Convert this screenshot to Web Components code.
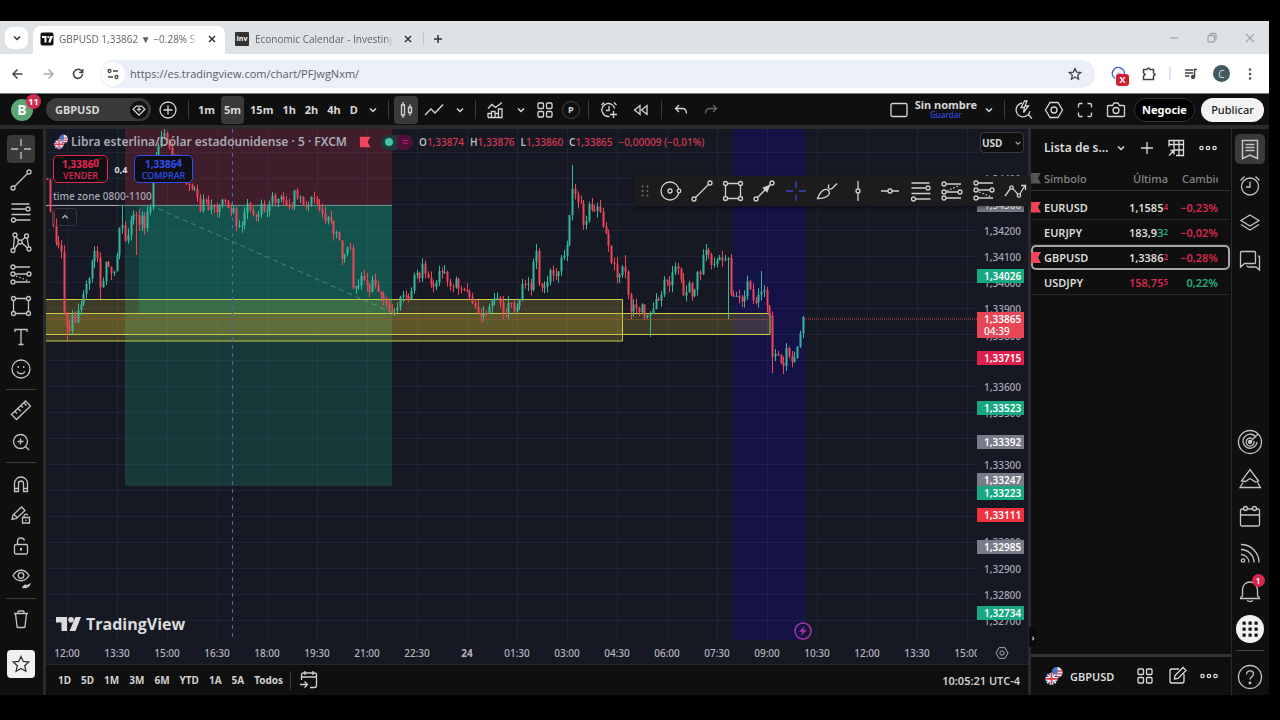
<!DOCTYPE html>
<html lang="es">
<head>
<meta charset="utf-8">
<title>GBPUSD 1,33862 ▼ −0.28% Sin nombre</title>
<style>
html,body{margin:0;background:#000}
body{font-family:"Noto Sans","Open Sans",sans-serif;color:#d6d6d6;font-size:12px}
</style>
</head>
<body>
<app-shell></app-shell>
<script>
const RESET = `*{box-sizing:border-box}
button{font:inherit;color:inherit;background:none;border:0;padding:0;margin:0;display:flex;align-items:center;justify-content:center;cursor:pointer;white-space:nowrap}
svg{display:block}`;

function define(name, css, html) {
  const t = document.createElement('template');
  t.innerHTML = `<style>${RESET}${css}</style>${html}`;
  customElements.define(name, class extends HTMLElement {
    constructor() {
      super();
      this.attachShadow({mode: 'open'}).append(t.content.cloneNode(true));
    }
  });
}

/* ---------- icons, on a 28 unit grid ---------- */
const dot = (x, y, r = 2) => `<circle cx="${x}" cy="${y}" r="${r}"/>`;
const ICONS = {
  cross: '<path d="M14 4v7M14 17v7M4 14h7M17 14h7"/>',
  trend: dot(6,22) + dot(22,6) + '<path d="M7.500 20.500 20.500 7.500"/>',
  fib: '<path d="M4.500 6h18M4.500 11h14M4.500 16.500h19M9 22h14.500"/>' + dot(21,11) + dot(6.500,22),
  pattern: dot(8,6) + dot(19.5,7) + dot(13,13) + dot(6,21.500) + dot(22,20) + '<path d="M7.500 8 6.300 19.500M9 7.700 12 11.500M14.500 11.500 18 8.500M20 9l1.700 9M11.500 14.500 7.500 20M15 14l5.500 5"/>',
  forecast: dot(6,6) + dot(6,13) + dot(22,13) + dot(6,21) + '<path d="M8 6h15M8 13h12M8 21h15"/><path stroke-dasharray="1.500 2" d="M9 15l13 5"/>',
  longpos: dot(6,7) + dot(6,15) + dot(22,15) + dot(6,21) + '<path d="M8 7h15M8 15h12M8 21h15"/><path stroke-dasharray="1.500 2" d="M9 14l13-6"/>',
  rect: dot(6.500,6.500) + dot(21.500,6.500) + dot(6.500,21.500) + dot(21.500,21.500) + '<path d="M8.500 6.500h11M8.500 21.500h11M6.500 8.500v11M21.500 8.500v11"/>',
  text: '<path d="M8 9V6.500h12V9M14 6.500v15M11.500 21.500h5"/>',
  smile: '<circle cx="14" cy="14" r="9"/><path d="M10 16.500c1.500 3 6.500 3 8 0M11.300 11v2M16.700 11v2"/>',
  ruler: '<path d="M4.500 18.500 18.500 5l5 5L9.500 23.500zM8 15.500l2 2M11 12.500l2.800 2.800M14 9.500l2 2M17 7l2.500 2.500"/>',
  zoom: '<circle cx="13.500" cy="13.500" r="7"/><path d="M18.500 18.500l3.500 3.500M13.500 10.500v6M10.500 13.500h6"/>',
  magnet: '<path d="M7.500 21.500v-8a6.500 6.500 0 0 1 13 0v8h-4v-8a2.500 2.500 0 0 0-5 0v8zM7.500 18.500h4M16.500 18.500h4"/>',
  pencil: '<path d="M5 18.500 6 14l8.500-8 3.500 3.500-8.500 8zM7 13.500l3.500 3.500M15.500 16.500h7v5.500h-7zM17 16.500v-1.500c0-2.500 3.500-2.500 3.500-.5M19 18.500v1.500"/>',
  lock: '<rect x="7.500" y="12.500" width="13" height="9.500" rx="1.500"/><path d="M10.500 12.500V9.500c0-4.500 6-4.500 7-1"/><path stroke-width="2" d="M14 16v2.500"/>',
  eye: '<path d="M6 11.500c4-7 12-7 16 0-4 7-12 7-16 0z"/><circle cx="14" cy="11.500" r="2.800"/><path fill="currentColor" stroke="none" d="M15 24c1-3 3-4.500 5-3l4-2c-1 4-4 6-9 5z"/>',
  trash: '<path d="M7 8.500h14M11 8.500V7a1 1 0 0 1 1-1h4a1 1 0 0 1 1 1v1.500M8.500 8.500 10 21.500q.2 1 1 1h6q.8 0 1-1L19.500 8.500"/>',
  star: '<path d="M14 6.500l2.300 5 5.500.6-4.100 3.700 1.200 5.400L14 18.400l-4.900 2.800 1.200-5.400-4.100-3.700 5.500-.6z"/>',
  chev: '<path stroke-width="1.500" d="M11 12.500l3 3 3-3"/>',
  up: '<path stroke-width="1.800" d="M10.500 15.500l3.500-3.500 3.500 3.500"/>',
  diamond: '<path fill="#111" stroke="none" d="M14 2.500a11.500 11.500 0 1 0 .01 0z"/><path d="M10.500 9h7l4 4-7.500 7.500L6.500 13zM14 10.500v5.500M11.300 13.300h5.400" stroke-width="1.600"/>',
  plus: '<circle cx="14" cy="14" r="8"/><path d="M14 9.500v9M9.500 14h9"/>',
  bars: '<path d="M9.500 9h3v10h-3zM11 6v3M11 19v3M16.500 11.500h3v5h-3zM18 8.500v3M18 16.500v3"/>',
  line: '<path d="M5 19l6-6 4 4 8-8.500"/>',
  indi: '<path d="M7 12.500l4-4 3.500 3 6.500-5M7 21.500v-4h3.500v4M10.500 21.500v-6H14v6M14 21.500v-4M17.500 21.500V13H21v8.500zM14 17.500h3.500M7 21.500h11"/>',
  grid: '<rect x="7" y="7" width="5.500" height="5.500" rx="1"/><rect x="15.500" y="7" width="5.500" height="5.500" rx="1"/><rect x="7" y="15.500" width="5.500" height="5.500" rx="1"/><rect x="15.500" y="15.500" width="5.500" height="5.500" rx="1"/>',
  alarmplus: '<path d="M19.700 12.500a6.500 6.500 0 1 0-5.200 7.900M14 10v4.500h-3M6.500 9l2.500-2.500M21.500 9 19 6.500M18.500 15v7M15 18.500h7"/>',
  rewind: '<path d="M13 9.500v9L7.500 14zM20 9.500v9L14.500 14z"/>',
  undo: '<path d="M12 9 8.500 12.500 12 16M8.500 12.500H15q4.500 0 4.500 5"/>',
  redo: '<path d="M16 9l3.500 3.500L16 16M19.500 12.500H13q-4.500 0-4.500 5"/>',
  square: '<rect x="6" y="7.500" width="16" height="13" rx="1.500"/>',
  quick: '<path d="M12 7a7 7 0 1 0 8 8M18 18.500l4 4M14.500 5l-3.500 6.500h3.500l-1 5L18.500 10H15l2-5z"/>',
  gear: '<path d="M10 6.500h8l4.500 7.500L18 21.500h-8L5.500 14z"/><circle cx="14" cy="14" r="3"/>',
  full: '<path d="M7.500 11.500V9q0-1.500 1.500-1.500h2.500M16.500 7.500H19q1.500 0 1.500 1.500v2.500M20.500 16.500V19q0 1.500-1.500 1.500h-2.500M11.500 20.500H9q-1.500 0-1.500-1.500v-2.500"/>',
  camera: '<path d="M6.500 9.500h4l1.500-2.500h4l1.500 2.500h4q1 0 1 1v9q0 1-1 1h-15q-1 0-1-1v-9q0-1 1-1z"/><circle cx="14" cy="14.500" r="3"/>',
  bigplus: '<path d="M14 8v12M8 14h12"/>',
  table: '<path d="M7 12.500v-6h14.500v15H14M7 10.500h14.500M12 6.500v9M17 6.500v15M12 16h9.500M7 21.500l5-5M8.500 16.500H12v4"/>',
  more: dot(7.500,14,1.700) + dot(14,14,1.700) + dot(20.500,14,1.700),
  list: '<path stroke-width="1.500" d="M6.500 5.500h15v18L14 20l-7.500 3.500zM9.500 9.500h9M9.500 12.500h9M9.500 15.500h9"/>',
  alarm: '<circle cx="14" cy="14.500" r="8.500"/><path d="M14 9.500V15h-4M4.500 8.500l4-4M23.500 8.500l-4-4"/>',
  layers: '<path d="M14 6l9 5.500-9 5.500-9-5.500zM5 15.500l9 5.500 9-5.500"/>',
  chat: '<path d="M5.500 5.500h13q1 0 1 1v10q0 1-1 1H8.500l-4 3.500v-14.500q0-1 1-1zM22 10q1.500 0 1.500 1v13l-3.500-3h-7.500q-1.500 0-1.500-1.500"/>',
  radar: '<circle cx="14" cy="14" r="11.500"/><path d="M20 9.500a7 7 0 1 0 1 4.500M18 13a4 4 0 1 1-2-2.500M14 14l8-8"/><circle cx="14" cy="14" r="1.500" fill="currentColor"/>',
  pyramid: '<path d="M14 4.500l8.500 11.500-3 1-5.500-3.500-4.500 3-4-.5zM7 17.500l-3 5h20.500l-3-5"/>',
  cal: '<path d="M6 7h16q1.500 0 1.500 1.500v14q0 1.500-1.500 1.500H6q-1.500 0-1.500-1.500v-14Q4.500 7 6 7zM4.500 13h19"/><circle fill="#0f0f0f" cx="9.500" cy="6.500" r="2"/><circle fill="#0f0f0f" cx="18.500" cy="6.500" r="2"/>',
  rss: '<path d="M5 5.500A18 18 0 0 1 23 23.500M5 10.500a13 13 0 0 1 13 13M5 15.500a8 8 0 0 1 8 8"/><circle cx="7" cy="21.500" r="1.700"/>',
  bell: '<path d="M4.500 22.500h19q0-1.500-2-2.500v-6.500c0-10-15-10-15 0V20q-2 1-2 2.500zM11 24.500q3 2 6 0"/>',
  help: '<circle cx="14" cy="14" r="11.500"/><path d="M10.500 11.500c0-5 7-4.500 7-.5 0 3-3.500 3-3.500 5.500"/><circle cx="14" cy="20" r=".8"/>',
  dots9: [8,14,20].map(y => [8,14,20].map(x => `<rect x="${x-1.500}" y="${y-1.500}" width="3.200" height="3.200" rx=".5" fill="currentColor" stroke="none"/>`).join('')).join(''),
  edit: '<path d="M16 7H9Q7 7 7 9v10q0 2 2 2h10q2 0 2-2v-7M11.500 17l.5-3.500L20 5.500l3 3-8 8z"/>',
  goto: '<path d="M6.500 11h15M6.500 14V9q0-2 2-2h11q2 0 2 2v10.500q0 2-2 2H15M10 5v4M18 5v4M5 18.500h7M9.500 15.500l3 3-3 3"/>',
  target: '<circle cx="14" cy="14" r="9"/><circle cx="14" cy="14" r="2"/><circle cx="23" cy="14" r="1.800" fill="#1c1c1c"/>',
  arrowline: dot(6,22) + dot(22,6) + '<path d="M7.500 20.500 20.500 7.500"/><path fill="currentColor" d="M19.500 8.500l-2.500 6-3.500-3.500z"/>',
  brush: '<path d="M4.500 21.500c3-8 8-11 11-8 3 4-2 8-11 8zM16 7.500c-2 4 1 6 3.500 3.500l4.500-4.500"/>',
  vline: '<path d="M14 4v8M14 16v8"/>' + dot(14,14),
  hline: '<path d="M5 14h7M16 14h7"/>' + dot(14,14),
  path: '<path d="M4 19l6.500-9 7.500 8.500L24 8.500M20 8.500h4.500V13"/>' + '<circle cx="10.500" cy="10.500" r="1.700" fill="#1c1c1c"/><circle cx="18" cy="18.500" r="1.700" fill="#1c1c1c"/>',
  grip: [9.5,14,18.5].map(y => [11.5,16.5].map(x => `<circle cx="${x}" cy="${y}" r=".9" fill="currentColor" stroke="none"/>`).join('')).join(''),
  close: '<path stroke-width="1.500" d="M11 11l6 6M17 11l-6 6"/>',
  tabplus: '<path stroke-width="1.500" d="M14 10v8M10 14h8"/>',
  back: '<path stroke-width="1.500" d="M18.500 14h-9M13.500 9.500 9 14l4.500 4.500"/>',
  fwd: '<path stroke-width="1.500" d="M9.500 14h9M14.500 9.500 19 14l-4.500 4.500"/>',
  reload: '<path stroke-width="1.500" d="M18.500 14a4.500 4.500 0 1 1-1.500-3.500l1.500 1.500M18.700 9v3.500h-3.500"/>',
  tune: '<path stroke-width="1.300" d="M14 11h5M9 17h5"/><circle stroke-width="1.300" cx="10.500" cy="11" r="1.500"/><circle stroke-width="1.300" cx="17.500" cy="17" r="1.500"/>',
  bstar: '<path stroke-width="1.300" d="M14 8.500l1.700 3.700 4 .3-3 2.700.9 4L14 17l-3.600 2.200.9-4-3-2.700 4-.3z"/>',
  puzzle: '<path stroke-width="1.500" d="M8.500 9.500h3.500q1.500-3 3 0h3.500v3.500q3 1.500 0 3v3.500h-10v-3.500q3-1.500 0-3z"/>',
  music: '<path stroke-width="1.500" d="M8 10h8M8 13h8M8 16h4.500M17.500 17V9.500h2.500"/><circle cx="16" cy="17" r="1.500" fill="currentColor"/>',
  kebab: [9.500,14,18.500].map(y => `<circle cx="14" cy="${y}" r="1.200" fill="currentColor" stroke="none"/>`).join(''),
  min: '<path d="M10 14h8"/>',
  max: '<rect x="10" y="11.500" width="6.500" height="6.500" rx="1"/><path d="M12 11.500v-1q0-1 1-1h4q1 0 1 1v4.500q0 1-1 1"/>',
  wclose: '<path d="M10 10l8 8M18 10l-8 8"/>',
  bolt: '<circle cx="14" cy="14" r="8" stroke-width="1.500"/><path fill="currentColor" stroke="none" d="M15.500 9 10 14.800h3.200L12 19l5.800-6h-3.300z"/>',
  flag: '<path fill="currentColor" stroke="none" d="M8 8h12.500l-3.500 6 3.500 6H8z"/>',
  pair: '<defs><clipPath id="a"><circle cx="18.500" cy="9" r="7.500"/></clipPath><clipPath id="b"><circle cx="10.500" cy="18" r="8.500"/></clipPath></defs><g clip-path="url(#a)" stroke="none"><path fill="#eee" d="M10 0h18v18H10z"/><path stroke="#d8404d" stroke-width="2" d="M10 7h18M10 11h18M10 15h18"/><path fill="#3f74c8" d="M10 0h9v10h-9z"/></g><g clip-path="url(#b)"><path fill="#26468f" stroke="none" d="M0 8h20v20H0z"/><path stroke="#fff" stroke-width="2" d="M2 9l17 17M19 9 2 26"/><path stroke="#fff" stroke-width="5" d="M10.500 8v20M0 18h20"/><path stroke="#e0374b" stroke-width="2.500" d="M10.500 8v20M0 18h20"/></g>',
  tv: '<rect x="7.500" y="7.500" width="13" height="13" rx="2" fill="#111" stroke="none"/><path fill="#fff" stroke="none" d="M9 11h4.500v6.500h-2v-4.500H9zM17 11h3l-2.500 6.500h-2.200z"/><circle cx="15.200" cy="12" r="1" fill="#fff" stroke="none"/>',
  ghost: '<path stroke="#4a62d8" stroke-width="1.500" d="M10 18.500a6 6 0 1 1 9-3"/><circle cx="14" cy="15" r="2" stroke="#c8b8e8"/>'
};
customElements.define('tv-icon', class extends HTMLElement {
  constructor() { super(); this.attachShadow({mode: 'open'}); }
  connectedCallback() {
    this.shadowRoot.innerHTML = `<style>:host{display:block;flex:none;width:28px;height:28px}svg{display:block;width:100%;height:100%}</style>
    <svg viewBox="0 0 28 28" fill="none" stroke="currentColor" stroke-width="1.3" aria-hidden="true">${ICONS[this.getAttribute('name')]}</svg>`;
  }
});
const btn = (icon, label, cls = '') => `<button class="${cls}" aria-label="${label}"><tv-icon name="${icon}"></tv-icon></button>`;

/* ---------- browser frame ---------- */
define('browser-tabs', `
:host{display:flex;height:33px;padding:0 0 0 5px;background:#dee2e5;color:#333;font:10px "Open Sans",sans-serif;align-items:flex-end}
.menu{width:23px;height:22px;border-radius:8px;background:#fff;margin:0 5px 5px 0;overflow:hidden}
.tab{display:flex;align-items:center;width:192px;height:28px;padding-bottom:2px;border-radius:8px 8px 0 0;color:#5f6368;overflow:hidden}
.tab.on{background:#fff}
.tab.off{width:196px}
.tab tv-icon{margin-right:-2px}
.tab button{width:28px;color:#333;flex:none}
.t{flex:1;overflow:hidden;white-space:nowrap;-webkit-mask:linear-gradient(90deg,#000 94%,transparent);mask:linear-gradient(90deg,#000 94%,transparent)}
.inv{flex:none;width:14px;height:14px;margin:0 6px 0 10px;background:#333;color:#fff;font:bold 7px/14px "Open Sans",sans-serif;text-align:center;border-radius:1px}
.sep{width:1px;height:14px;background:#c3c7ca;margin:0 0 9px 2px}
.plus{width:28px;height:28px;padding-bottom:2px}
.win{display:flex;margin-left:auto;color:#a4a8ab}
.win button{width:38px;height:32px}`,
`<button class="menu" aria-label="Buscar pestañas"><tv-icon name="chev"></tv-icon></button>
<div class="tab on"><tv-icon name="tv"></tv-icon><span class="t">GBPUSD 1,33862 ▼ −0.28% Sin nombre</span>${btn('close','Cerrar')}</div>
<div class="tab off"><span class="inv">Inv</span><span class="t">Economic Calendar - Investing.com</span>${btn('close','Cerrar')}</div>
<span class="sep"></span>${btn('tabplus','Nueva pestaña','plus')}
<div class="win">${btn('min','Minimizar')}${btn('max','Restaurar')}${btn('wclose','Cerrar ventana')}</div>`);

define('browser-bar', `
:host{display:flex;align-items:center;height:40px;padding:0 3px 0 4px;background:#fff;color:#444;border-bottom:1px solid #777}
button{width:28px;height:28px;margin-right:2px}
.dim{color:#aaa}
.box{flex:1;display:flex;align-items:center;height:28px;margin:0 10px 0 6px;padding-right:4px;border-radius:14px;background:#ebeffa;overflow:hidden}
.tune{width:24px;height:24px;border-radius:12px;background:#fff;margin-left:1px;overflow:hidden}
input{flex:1;min-width:0;border:0;background:none;outline:0;font:11px "Open Sans",sans-serif;color:#5a5d63;padding:0 0 0 3px}
.ext{position:relative}
.x{position:absolute;right:4px;bottom:2px;width:13px;height:12px;border-radius:3px;background:#cf1f30;color:#fff;font:bold 9px/12px "Open Sans",sans-serif;text-align:center}
.sep{width:2px;height:13px;background:#dfe3f3;margin:0 6px 0 4px}
.me{width:17px;height:17px;border-radius:9px;background:#3f5a60;color:#ddd;font:10px "Open Sans",sans-serif;margin:0 6px}`,
`${btn('back','Atrás')}${btn('fwd','Adelante','dim')}${btn('reload','Recargar')}
<div class="box">${btn('tune','Información del sitio','tune')}<input aria-label="Dirección" value="https://es.tradingview.com/chart/PFJwgNxm/">${btn('bstar','Favorito')}</div>
<button class="ext" aria-label="Extensión"><tv-icon name="ghost"></tv-icon><span class="x">X</span></button>
${btn('puzzle','Extensiones')}<span class="sep"></span>${btn('music','Multimedia')}<button class="me">C</button>${btn('kebab','Menú')}`);

/* ---------- top toolbar ---------- */
define('top-bar', `
:host{display:flex;align-items:center;gap:2px;height:35px;padding:0 5px 0 11px;background:#0f0f0f;border-bottom:4px solid #2b2b2d;font-weight:700;font-size:11px}
.av{position:relative;width:22px;height:22px;border-radius:11px;background:#5aa773;color:#fff;font-size:14px;margin-right:11px}
.n{position:absolute;left:15px;top:-5px;width:15px;height:15px;border-radius:8px;background:#d22a4e;font-size:9px;line-height:15px}
.sym{width:105px;height:23px;border-radius:12px;background:#3a3a3a;justify-content:space-between;padding:0 1px 0 9px}
.sym tv-icon{width:22px;height:22px}
.i{width:28px;height:28px}
.m{width:24px;height:28px}
.l{width:30px;height:28px}
.c{width:20px;height:28px}
.on{background:#3a3a3a;border-radius:4px}
.sep{width:1px;height:19px;background:#3a3a3a;margin:0 3px}
.tf{display:flex;gap:3px;margin-left:1px}
.tf button{height:28px;padding:0 3px}
.p{width:18px;height:18px;border:1px solid #444;border-radius:9px;font-size:9px;margin:0 3px}
.dim{color:#666}
.name{display:block;text-align:center;line-height:10px}
.name small{display:block;color:#2f48e0;font-size:8px;font-weight:500}
.gap{flex:1}
.neg,.pub{height:24px;border-radius:12px}
.neg{width:61px;background:#000;border:1px solid #333;color:#fff;margin:0 4px 0 2px}
.pub{width:63px;background:#f2f2f2;color:#222;font-weight:500}`,
`<button class="av" aria-label="Cuenta">B<span class="n">11</span></button>
<button class="sym">GBPUSD<tv-icon name="diamond"></tv-icon></button>${btn('plus','Comparar','l')}<span class="sep"></span>
<div class="tf"><button>1m</button><button class="on">5m</button><button>15m</button><button>1h</button><button>2h</button><button>4h</button><button>D</button></div>
${btn('chev','Intervalos','c')}<span class="sep"></span>${btn('bars','Velas','m on')}${btn('line','Línea','i')}${btn('chev','Tipos de gráfico','c')}<span class="sep"></span>
${btn('indi','Indicadores','i')}${btn('chev','Favoritos','c')}${btn('grid','Plantillas','m')}<button class="p">P</button><span class="sep"></span>
${btn('alarmplus','Alerta','l')}${btn('rewind','Repetición','l')}<span class="sep"></span>${btn('undo','Deshacer','i')}${btn('redo','Rehacer','i dim')}
<span class="gap"></span>
${btn('square','Diseño','i')}<button class="name">Sin nombre<small>Guardar</small></button>${btn('chev','Gestionar diseño','c')}<span class="sep"></span>
${btn('quick','Búsqueda rápida','i')}${btn('gear','Configuración','i')}${btn('full','Pantalla completa','l')}${btn('camera','Captura','i')}
<button class="neg">Negocie</button><button class="pub">Publicar</button>`);

/* ---------- drawing rail ---------- */
define('drawing-rail', `
:host{display:flex;flex-direction:column;align-items:center;justify-content:space-between;width:46px;padding:6px 1px 17px 0;background:#0f0f0f;border-right:3px solid #2b2b2d;color:#c4c4c4}
button{width:28px;height:28px}
.on{background:#3a3a3a;border-radius:4px}
.sep{width:30px;height:1px;background:#3c3c3c;margin:3px 0}
.fav{background:#f0f0f0;color:#333;border-radius:4px;margin-top:13px}`,
btn('cross','Cursor','on') + btn('trend','Líneas') + btn('fib','Fibonacci') + btn('pattern','Patrones') + btn('forecast','Previsión') + btn('rect','Formas') + btn('text','Texto') + btn('smile','Iconos') +
'<span class="sep"></span>' + btn('ruler','Medir') + btn('zoom','Acercar') + '<span class="sep"></span>' +
btn('magnet','Imán') + btn('pencil','Modo dibujo') + btn('lock','Bloquear') + btn('eye','Ocultar') + '<span class="sep"></span>' + btn('trash','Eliminar') + btn('star','Favoritos','fav'));

/* ---------- chart ---------- */
/* Price path: x,y pairs in plot pixels; the plot starts at x = 46, y = 129. */
const PATH = `47,180 49,208 52,222 54,238 58,245 61,249 63,310 66,322 68,334 72,318 76,324 79,305 82,308 84,285 88,281 92,260 95,252 98,256 100,288 103,280 105,257 108,270 110,266 113,278 116,262 118,239 121,213 124,240 126,240 130,224 135,208 138,228 141,212 143,231 147,215 150,206 152,180 156,150 160,140 165,132 170,150 175,155 180,168 185,186 190,187 195,191 200,208 204,198 208,207 213,207 217,212 222,202 225,204 230,215 233,206 236,229 243,222 246,204 250,209 254,215 259,214 262,203 266,216 270,200 273,194 276,206 281,194 285,203 292,206 295,189 299,199 303,203 307,208 312,198 316,204 321,209 325,220 331,218 334,239 338,231 342,261 346,247 350,248 353,290 358,288 362,276 366,286 369,292 372,279 378,291 383,298 386,306 390,312 393,315 397,307 400,296 404,292 408,304 412,284 415,270 420,276 423,263 427,279 431,284 435,286 439,270 442,270 446,277 451,289 456,281 461,292 466,288 470,296 474,306 477,314 481,315 485,313 489,307 493,300 499,300 501,309 504,319 508,305 512,304 515,312 519,303 522,287 527,284 531,290 534,257 537,252 539,288 543,291 547,283 549,272 553,275 558,274 562,256 566,254 568,223 571,203 573,178 576,206 579,195 582,215 585,234 588,200 592,214 596,206 599,204 602,222 606,234 610,257 615,270 618,279 622,268 624,266 628,298 631,314 634,299 638,314 641,305 645,316 651,316 654,300 657,297 660,302 663,283 665,276 669,284 673,272 677,266 682,288 685,300 688,279 693,301 697,270 701,272 703,253 707,252 711,264 715,263 718,255 722,264 725,257 728,258 729,294 733,293 737,300 743,304 748,276 752,300 757,300 761,290 764,290 766,304 769,306 771,357 774,350 779,356 783,366 786,346 790,362 793,363 796,350 799,344 801,318 803,318`
  .split(/\s+/).map(p => p.split(',').map(Number));
/* Long wicks, by x: [high, low], 0 where the ordinary wick stands. */
const SPIKES = {573: [165, 0], 729: [0, 319], 650: [0, 337], 630: [0, 319], 68: [0, 340], 771: [0, 373], 537: [244, 0], 762: [271, 0], 706: [244, 0], 625: [255, 0], 121: [205, 0], 784: [0, 374], 100: [0, 299], 137: [0, 255], 802: [316, 0]};
function level(x) {
  for (let i = 1; i < PATH.length; i++) if (x <= PATH[i][0]) {
    const [a, b] = PATH[i - 1], [c, d] = PATH[i];
    return b + (d - b) * (x - a) / (c - a);
  }
  return PATH[PATH.length - 1][1];
}
function candles() {
  let up = '', down = '', prev = 178;
  for (let i = 0; i < 273; i++) {
    const x = 47.2 + i * 2.778, r = n => Math.abs(Math.sin(i * n) * 43.7) % 1;
    const close = level(x) + (r(12.9) - .5) * 6;
    let hi = Math.min(prev, close) - r(7.3) * 7, lo = Math.max(prev, close) + r(3.7) * 7;
    for (const k in SPIKES) if (Math.abs(k - x) < 1.4) { if (SPIKES[k][0]) hi = SPIKES[k][0]; if (SPIKES[k][1]) lo = SPIKES[k][1]; }
    const px = Math.round(x) - 46, a = Math.min(prev, close) - 129, b = Math.max(prev, close, Math.min(prev, close) + 1) - 129;
    const d = `M${px - .5} ${a.toFixed(1)}h2V${b.toFixed(1)}h-2zM${px} ${(hi - 129).toFixed(1)}h1V${(lo - 129).toFixed(1)}h-1z`;
    if (close < prev) up += d; else down += d;
    prev = close;
  }
  return `<path fill="#35b79c" d="${up}"/><path fill="#ee4558" d="${down}"/>`;
}
const vgrid = Array.from({length: 19}, (_, i) => `M${21.5 + i * 50} 0V511`).join('');
const hgrid = Array.from({length: 19}, (_, i) => `M0 ${23.500 + i * 26}H931`).join('');
define('price-plot', `:host{display:block;min-width:0;overflow:hidden}svg{width:100%;height:100%}`,
`<svg viewBox="0 0 931 511" preserveAspectRatio="xMinYMin slice" role="img" aria-label="Gráfico de velas GBPUSD">
<rect x="687" width="72" height="511" fill="#141247"/>
<path d="${vgrid}${hgrid}" stroke="#7a88b0" stroke-opacity=".1" fill="none"/>
<rect x="79" width="267" height="76" fill="#f23645" fill-opacity=".19"/>
<rect x="79" y="76" width="267" height="281" fill="#1c9a7c" fill-opacity=".25"/>
<rect x="93" y="76" width="253" height="109" fill="#0c9a7c" fill-opacity=".27"/>
<path d="M72 76.500H346" stroke="#5f8f8a"/><path d="M0 76.500H72" stroke="#aaa"/>
<path d="M104 76 347 184" stroke="#4f8478" stroke-dasharray="5 4" fill="none"/>
<g fill="#ffe53b" fill-opacity=".17" stroke="#c8cc48"><path d="M-2 170.500H576.500V212H-2z"/><path d="M-2 184.500H724V205.500H-2z"/></g>
${candles()}
<path d="M186.500 0V511" stroke="#4a66b8" stroke-dasharray="4 4"/>
<path d="M758 190H931" stroke="#d8384f" stroke-dasharray="1 1"/><path d="M0 190.500H724" stroke="#a05038" stroke-opacity=".5"/>
</svg>`);

/* Price scale: [text, centre y from the plot's top, kind] */
const SCALE = [['1,34400',50,''],['1,34300',76,'g'],['1,34200',102,''],['1,34100',128,''],['1,34000',154,''],['1,34026',147,'u'],['1,33900',180,''],['1,33800',207,''],['1,33715',229,'d'],['1,33600',258,''],['1,33500',284,''],['1,33523',279,'u'],['1,33300',336,''],['1,33392',313,'g'],['1,33247',351,'g'],['1,33223',364,'u'],['1,33111',386,'r'],['1,33000',413,''],['1,32985',418,'g'],['1,32900',440,''],['1,32800',466,''],['1,32700',492,''],['1,32734',484,'u']];
define('price-scale', `
:host{display:block;position:relative;width:51px;font-size:10px;font-weight:500;color:#a9abb3;overflow:hidden}
span{position:absolute;left:0;width:47px;height:14px;line-height:14px;padding-left:7px;transform:translateY(-50%)}
.u,.d,.r,.g,.now{color:#fff;font-weight:600}
.u{background:#16a880}.d{background:#e0204c}.r{background:#ee3340}.g{background:#787b88}
.now{height:26px;line-height:12px;padding-top:1px;background:#e84656}
.now small{display:block;font-size:10px;font-weight:500}
select{position:absolute;left:3px;top:3px;width:44px;height:21px;background:#0f0f0f;color:#d6d6d6;border:1px solid #3a3a3c;border-radius:4px;font:700 10px "Noto Sans",sans-serif;appearance:none;padding:0 1px}
.arrow{left:34px;top:14px;width:14px;padding:0;pointer-events:none}
.arrow tv-icon{width:22px;height:22px;margin:-4px}`,
SCALE.map(([t, y, k]) => `<span class="${k}" style="top:${y}px">${t}</span>`).join('') +
'<span class="now" style="top:196px">1,33865<small>04:39</small></span><select aria-label="Moneda"><option>USD</option></select><span class="arrow"><tv-icon name="chev"></tv-icon></span>');

define('time-scale', `
:host{display:flex;height:24px;padding:2px 12px 0 0;align-items:center;font-size:10px;font-weight:500;color:#b4b6bd}
.t{flex:1;display:flex;overflow:hidden;min-width:0}
.t span{flex:none;width:50px;text-align:center}
.t span:first-child{margin-left:-4px}
b{font-weight:700}
tv-icon{width:20px;height:20px;margin:0 4px 0 15px}`,
'<div class="t">' + '12:00 13:30 15:00 16:30 18:00 19:30 21:00 22:30 24 01:30 03:00 04:30 06:00 07:30 09:00 10:30 12:00 13:30 15:00'.split(' ').map(t => `<span>${t === '24' ? '<b>24</b>' : t}</span>`).join('') + '</div><tv-icon name="gear"></tv-icon>');

define('chart-legend', `
:host{display:block;color:#a9abb3}
.row{display:flex;align-items:center;height:18px}
.pair{width:16px;height:16px;margin-right:2px}
h1{margin:0;font-size:12px;line-height:18px;font-weight:600;white-space:nowrap}
.flag{width:24px;height:24px;color:#f2455a;margin:0 4px 0 6px}
.pill{display:flex;align-items:center;justify-content:space-around;width:32px;height:15px;border-radius:8px;background:linear-gradient(90deg,#1f3a3a 50%,#4d1038 50%);color:#d81b74;font-size:12px;line-height:12px;margin-right:6px}
.pill i{width:8px;height:8px;border-radius:4px;background:#3ec8a4}
.ohlc{font-size:10px;font-weight:500;color:#d83850;white-space:nowrap}
.ohlc b{color:#b8bac2;font-weight:600}
.ohlc span{margin-right:6px}
.trade{display:flex;align-items:center;gap:6px;margin-top:4px;font-size:10px;font-weight:700;color:#ddd}
.trade button{display:block;height:28px;border-radius:5px;background:#0e0e14;border:1px solid;line-height:12px;text-align:center}
.trade small{display:block;font-size:9px;line-height:11px;font-weight:500}
.sell{width:55px;color:#e8264e}.buy{width:59px;color:#2c50f0}
.trade sup{font-size:10px;line-height:8px;vertical-align:1px}
.trade em{font-style:normal;font-size:9px;width:14px;text-align:center}
.study{margin-top:5px;font-size:10px;line-height:16px;font-weight:500}
.fold{width:24px;height:18px;margin-top:4px;border:1px solid #34363f;border-radius:3px;overflow:hidden}
.fold tv-icon{width:22px;height:22px}`,
`<div class="row"><tv-icon class="pair" name="pair"></tv-icon><h1>Libra esterlina/Dólar estadounidense · 5 · FXCM</h1><tv-icon class="flag" name="flag"></tv-icon><span class="pill"><i></i>≈</span>
<div class="ohlc"><span><b>O</b>1,33874</span><span><b>H</b>1,33876</span><span><b>L</b>1,33860</span><span><b>C</b>1,33865</span>−0,00009 (−0,01%)</div></div>
<div class="trade"><button class="sell">1,3386<sup>0</sup><small>VENDER</small></button><em>0,4</em><button class="buy">1,3386<sup>4</sup><small>COMPRAR</small></button></div>
<div class="study">time zone 0800-1100</div><button class="fold" aria-label="Plegar"><tv-icon name="up"></tv-icon></button>`);

define('favorites-bar', `
:host{display:flex;align-items:center;justify-content:space-between;height:30px;padding:0 1px 0 3px;background:#1c1c1e;color:#d0d0d0;box-shadow:0 2px 4px #0006;overflow:hidden}
button{width:28px;height:28px}
.grip{color:#777;margin:0 -6px}
.on{color:#3a46c8}`,
'<tv-icon class="grip" name="grip"></tv-icon>' + btn('target','Círculo') + btn('trend','Línea de tendencia') + btn('rect','Rectángulo') + btn('arrowline','Flecha') + btn('cross','Cursor','on') + btn('brush','Pincel') + btn('vline','Línea vertical') + btn('hline','Línea horizontal') + btn('fib','Fibonacci') + btn('longpos','Posición larga') + btn('forecast','Posición corta') + btn('path','Trayectoria'));

define('chart-pane', `
:host{display:grid;position:relative;grid-template:minmax(0,1fr) auto / minmax(0,1fr) auto;background:#161824;min-width:0;min-height:0}
time-scale{grid-column:1/-1}
chart-legend{position:absolute;left:7px;top:4px}
favorites-bar{position:absolute;right:-2px;top:47px;width:396px;z-index:1}
.brand{position:absolute;left:10px;bottom:28px;display:flex;align-items:center;gap:5px;color:#dcdcdc;font:700 16px/24px "Open Sans",sans-serif}
.bolt{position:absolute;left:743px;bottom:19px;color:#a236b0}
.bolt tv-icon{width:28px;height:28px}`,
`<price-plot></price-plot><price-scale></price-scale><time-scale></time-scale>
<chart-legend></chart-legend><favorites-bar></favorites-bar>
<div class="brand"><svg width="25" height="14" viewBox="0 0 25 14" fill="currentColor" aria-hidden="true"><path d="M0 0h11v14H5.500V5.500H0zM19.500 0H25l-5.500 14h-6z"/><circle cx="15" cy="2.800" r="2.800"/></svg>TradingView</div>
<button class="bolt" aria-label="Noticias"><tv-icon name="bolt"></tv-icon></button>`);

define('range-bar', `
:host{display:flex;align-items:center;height:31px;padding:0 8px 0 12px;background:#0f0f0f;border-top:1px solid #26272c;font-size:10px;font-weight:700;color:#d0d0d0}
.r{display:flex;gap:10px}
.sep{width:1px;height:19px;background:#3a3a3a;margin:0 4px 0 7px}
.time{margin-left:auto;font-size:11px;font-weight:600}
button{height:24px}`,
'<div class="r">' + '1D 5D 1M 3M 6M YTD 1A 5A Todos'.split(' ').map(t => `<button>${t}</button>`).join('') + '</div><span class="sep"></span>' + btn('goto','Ir a la fecha') + '<button class="time">10:05:21 UTC-4</button>');

/* ---------- watchlist ---------- */
const ROWS = [['EURUSD','1,1585','','4','−0,23%','dn',1],['EURJPY','183,9','3','2','−0,02%','dn',0,'up'],['GBPUSD','1,3386','','2','−0,28%','dn',1],['USDJPY','','158,75','5','0,22%','up',0,'dn']];
define('watch-list', `
:host{display:flex;flex-direction:column;position:relative;width:204px;background:#0f0f0f;border-left:3px solid #2b2b2d;border-right:1px solid #2b2b2d;font-weight:600;color:#dcdcdc}
header{display:flex;align-items:center;height:37px;padding-left:13px;font-size:12px}
header .c{width:26px}
header .k{width:32px}
table{border-collapse:separate;border-spacing:0;width:199px;table-layout:fixed;font-size:11px}
th{color:#858585;font-weight:500;font-size:11px;text-align:right;height:25px;border-bottom:1px solid #333;padding:0;overflow:hidden;white-space:nowrap}
th:first-child,td:first-child{text-align:left;width:82px}
td:nth-child(2),th:nth-child(2){width:55px}
th:last-child,td:last-child{padding-right:12px}
th:last-child div{width:36px;margin-left:auto;overflow:hidden;text-align:left}
td{height:25px;padding:0;text-align:right;border-bottom:1px solid #26262a}
tbody::before{content:"";display:block;height:4px}
.s{display:flex;align-items:center;gap:3px}
.f{width:10px;height:11px;background:#f2455a;clip-path:polygon(0 0,100% 0,70% 50%,100% 100%,0 100%)}
.f.no{background:none}.f.gray{background:#555}
.dn{color:#d62850}.up{color:#25b083}
sup{font-size:8px;line-height:8px;vertical-align:2px}
.sel td{border-top:2px solid #a6a6a6;border-bottom:2px solid #a6a6a6}
.sel td:first-child{border-left:2px solid #a6a6a6;border-radius:5px 0 0 5px}
.sel td:last-child{border-right:2px solid #a6a6a6;border-radius:0 5px 5px 0;padding-right:10px}
.sel .f{margin-left:-2px}
footer{display:flex;align-items:center;height:41px;margin-top:auto;border-top:3px solid #333;padding:0 6px 0 13px;font-size:11px}
footer .pair{width:20px;height:20px;margin-right:6px}
footer button{width:32px}
footer span{margin-right:auto}
.handle{position:absolute;left:-2px;bottom:48px;width:8px;height:20px;background:#0a0a0a;border-radius:0 4px 4px 0;font-size:9px}`,
`<header><button>Lista de s...</button>${btn('chev','Listas','c')}${btn('bigplus','Añadir','c')}${btn('table','Vista de tabla','k')}${btn('more','Más','k')}</header>
<table><thead><tr><th><div class="s"><i class="f gray"></i>Símbolo</div></th><th>Última</th><th><div>Cambio%</div></th></tr></thead><tbody>` +
ROWS.map(([s, p, q, u, c, k, f, m]) => `<tr class="${s === 'GBPUSD' ? 'sel' : ''}"><td><div class="s"><i class="f ${f ? '' : 'no'}"></i>${s}</div></td><td>${p}<span class="${m || k}">${q}<sup>${u}</sup></span></td><td class="${k}">${c}</td></tr>`).join('') +
`</tbody></table><footer><tv-icon class="pair" name="pair"></tv-icon><span>GBPUSD</span>${btn('grid','Cuadrícula')}${btn('edit','Editar')}${btn('more','Más')}</footer><button class="handle" aria-label="Ocultar panel">›</button>`);

define('side-rail', `
:host{display:flex;flex-direction:column;align-items:center;gap:7px;width:37px;padding:5px 2px 3px 0;background:#0f0f0f;color:#c4c4c4}
button{width:30px;height:30px;flex:none;position:relative}
button tv-icon{width:28px;height:28px}
.on{background:#3a3a3a;border-radius:5px}
.gap{flex:1}
.apps{width:28px;height:28px;border-radius:14px;background:#f2f2f2;color:#111;margin:3px 0 0}
.sep{width:28px;height:1px;background:#444;margin-bottom:4px}
.n{position:absolute;right:0;top:-1px;width:13px;height:13px;border-radius:7px;background:#d8264e;color:#fff;font-size:9px;line-height:13px;font-weight:600}`,
btn('list','Lista de seguimiento','on') + btn('alarm','Alertas') + btn('layers','Árbol de objetos') + btn('chat','Chats') + '<span class="gap"></span>' +
btn('radar','Filtros') + btn('pyramid','Pine') + btn('cal','Calendarios') + btn('rss','Noticias') + '<button aria-label="Notificaciones"><tv-icon name="bell"></tv-icon><span class="n">1</span></button>' + btn('dots9','Productos','apps') + '<span class="sep"></span>' + btn('help','Ayuda'));

define('app-shell', `
:host{display:flex;flex-direction:column;min-height:100vh;padding:21px 11px 25px 0;box-sizing:border-box}
main{flex:1;display:grid;grid-template-columns:auto minmax(0,1fr) auto auto}
.mid{display:flex;flex-direction:column;min-width:0}
chart-pane{flex:1}`,
`<browser-tabs></browser-tabs><browser-bar></browser-bar><top-bar></top-bar>
<main><drawing-rail></drawing-rail><div class="mid"><chart-pane></chart-pane><range-bar></range-bar></div><watch-list></watch-list><side-rail></side-rail></main>`);
</script>
</body>
</html>
